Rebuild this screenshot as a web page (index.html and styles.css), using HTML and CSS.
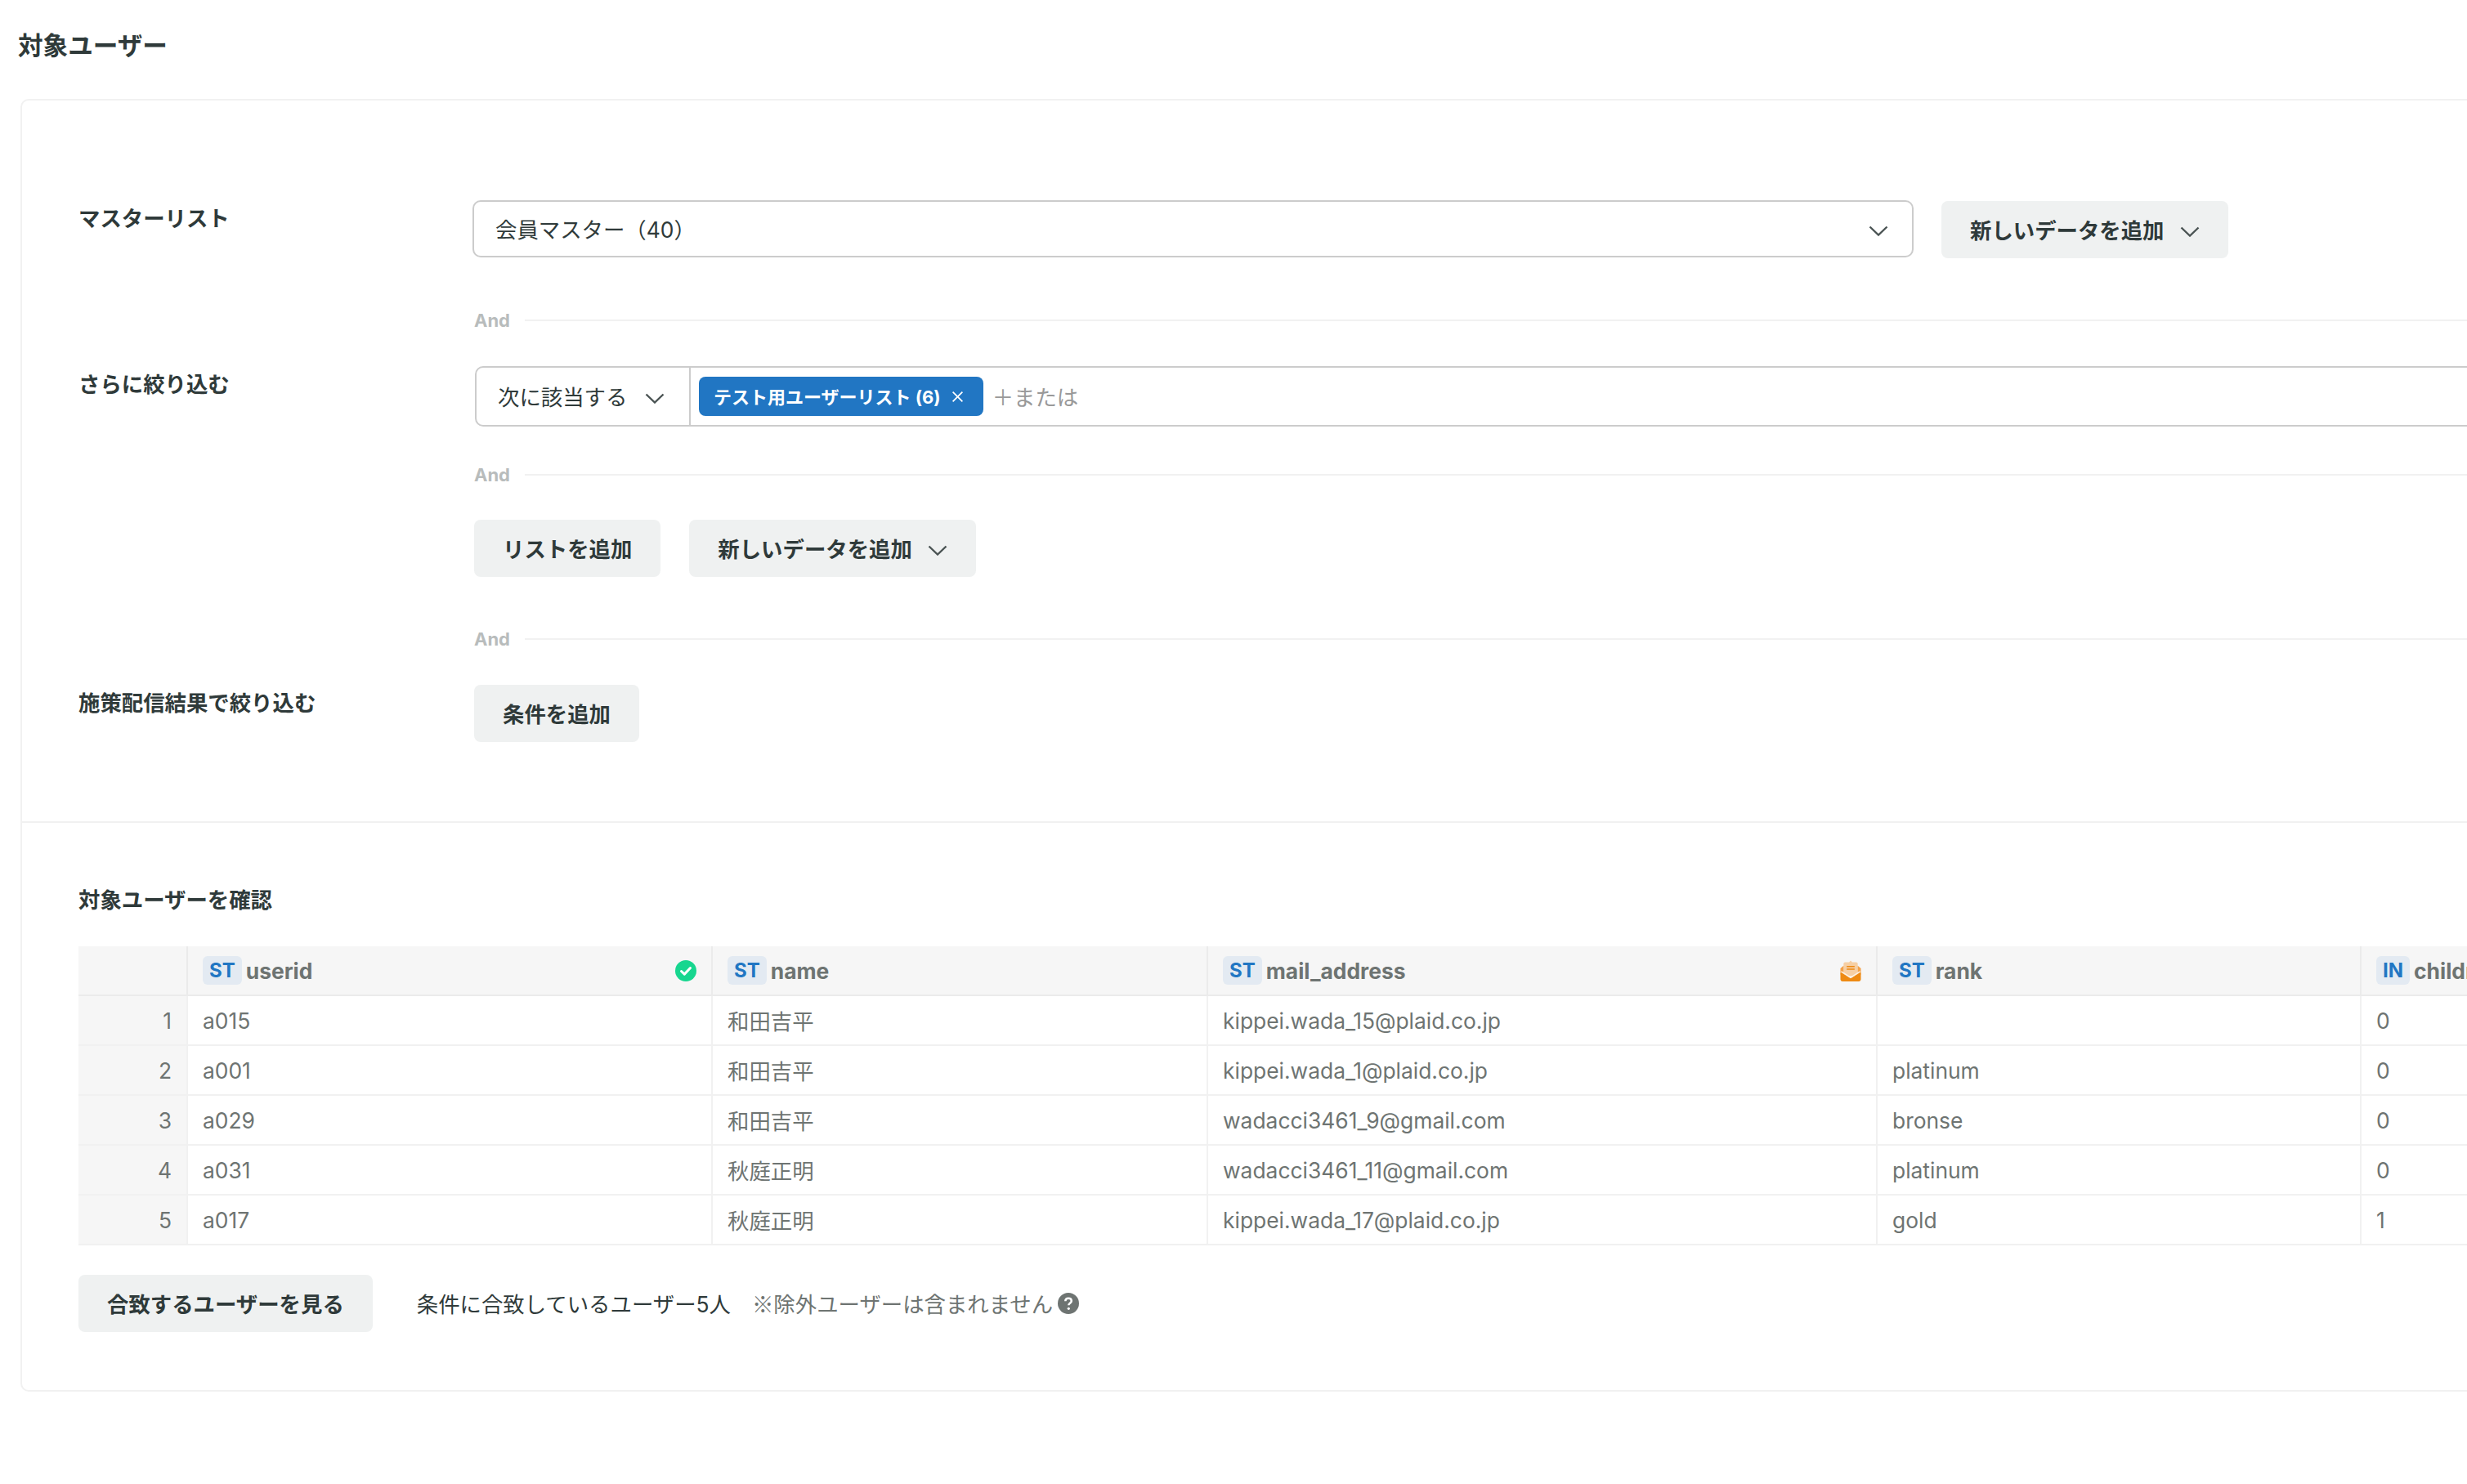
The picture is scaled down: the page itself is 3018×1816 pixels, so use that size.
FILE: index.html
```html
<!DOCTYPE html>
<html lang="ja">
<head>
    <meta charset="UTF-8">
    <title>対象ユーザー</title>
    <link rel="stylesheet" href="styles.css">
</head>
<body>
<div class="page">
    <h1 class="page-title">対象ユーザー</h1>
    <div class="card">
        <div class="conditions">
            <div class="cond-row">
                <div class="cond-label">マスターリスト</div>
                <div class="cond-body">
                    <div class="master-line">
                        <div class="select">
                            <span class="select-text">会員マスター（40）</span>
                            <svg class="chevron" viewBox="0 0 24 13"><path d="M1.500 1.500 12 11.500l10.500-10"/></svg>
                        </div>
                        <button class="btn">新しいデータを追加<svg class="chevron chevron-btn" viewBox="0 0 24 13"><path d="M1.500 1.500 12 11.500l10.500-10"/></svg></button>
                    </div>
                </div>
            </div>
            <div class="and-row and-outer"><span>And</span></div>
            <div class="cond-row">
                <div class="cond-label">さらに絞り込む</div>
                <div class="cond-body">
                    <div class="filter">
                        <div class="filter-mode">
                            <span class="select-text">次に該当する</span>
                            <svg class="chevron" viewBox="0 0 24 13"><path d="M1.500 1.500 12 11.500l10.500-10"/></svg>
                        </div>
                        <div class="filter-items">
                            <span class="chip">テスト用ユーザーリスト (6)<svg class="chip-x" viewBox="0 0 14 14"><path d="M1.500 1.500l11 11M12.500 1.500l-11 11"/></svg></span>
                            <span class="filter-or">＋または</span>
                        </div>
                    </div>
                    <div class="and-row and-inner"><span>And</span></div>
                    <div class="btn-line">
                        <button class="btn">リストを追加</button>
                        <button class="btn">新しいデータを追加<svg class="chevron chevron-btn" viewBox="0 0 24 13"><path d="M1.500 1.500 12 11.500l10.500-10"/></svg></button>
                    </div>
                </div>
            </div>
            <div class="and-row and-outer"><span>And</span></div>
            <div class="cond-row">
                <div class="cond-label">施策配信結果で絞り込む</div>
                <div class="cond-body">
                    <div class="btn-line">
                        <button class="btn">条件を追加</button>
                    </div>
                </div>
            </div>
        </div>
        <div class="preview">
            <h2 class="preview-title">対象ユーザーを確認</h2>
            <table class="users">
                <colgroup>
                    <col class="col-num">
                    <col class="col-userid">
                    <col class="col-name">
                    <col class="col-mail">
                    <col class="col-rank">
                    <col class="col-child">
                </colgroup>
                <thead>
                    <tr>
                        <th class="num"></th>
                        <th><div class="th-inner"><span class="type">ST</span>userid
                            <svg class="th-icon" viewBox="0 0 26 26"><circle cx="13" cy="13" r="13" fill="#17d68f"/><path d="M7.500 13.500l3.800 3.600 7.200-7.600" fill="none" stroke="#fff" stroke-width="3" stroke-linecap="round" stroke-linejoin="round"/></svg></div></th>
                        <th><div class="th-inner"><span class="type">ST</span>name</div></th>
                        <th><div class="th-inner"><span class="type">ST</span>mail_address
                            <svg class="th-icon" viewBox="0 0 26 27"><path d="M4 4.500Q4 2.500 6 2.500H11L13 .5l2 2h5q2 0 2 2V20H4z" fill="#f6cfa4"/><path d="M8 8h10M8 11.500h10" stroke="#ee8a13" stroke-width="1.600"/><path d="M4 7 0 10.500V15l4 3zM22 7l4 3.500V15l-4 3z" fill="#f3a14a"/><path d="M0 17l13 8 13-8v7.500q0 2.500-2.500 2.500H2.500Q0 27 0 24.500z" fill="#ee8a13"/><path d="M0 15l13 8 13-8v3L13 26 0 18z" fill="#ee8a13"/><path d="M1 14.500l12 7.500 12-7.500" fill="none" stroke="#fdf1e3" stroke-width="1.600"/></svg></div></th>
                        <th><div class="th-inner"><span class="type">ST</span>rank</div></th>
                        <th><div class="th-inner"><span class="type">IN</span>children</div></th>
                    </tr>
                </thead>
                <tbody id="user-rows"></tbody>
            </table>
            <div class="preview-foot">
                <button class="btn">合致するユーザーを見る</button>
                <span class="match-count">条件に合致しているユーザー5人</span>
                <span class="match-note">※除外ユーザーは含まれません</span>
                <svg class="help" viewBox="0 0 26 26"><circle cx="13" cy="13" r="13" fill="#6e7472"/><path d="M9.300 10.200c0-2.200 1.700-3.500 3.800-3.500s3.700 1.200 3.700 3.200c0 2.700-3.500 2.800-3.500 5.300" fill="none" stroke="#fff" stroke-width="2.500"/><circle cx="13.300" cy="19.300" r="1.600" fill="#fff"/></svg>
            </div>
        </div>
    </div>
</div>
<script>
    const users = [
        { id: 'a015', name: '和田吉平', mail: 'kippei.wada_15@plaid.co.jp', rank: '', child: 0 },
        { id: 'a001', name: '和田吉平', mail: 'kippei.wada_1@plaid.co.jp', rank: 'platinum', child: 0 },
        { id: 'a029', name: '和田吉平', mail: 'wadacci3461_9@gmail.com', rank: 'bronse', child: 0 },
        { id: 'a031', name: '秋庭正明', mail: 'wadacci3461_11@gmail.com', rank: 'platinum', child: 0 },
        { id: 'a017', name: '秋庭正明', mail: 'kippei.wada_17@plaid.co.jp', rank: 'gold', child: 1 },
    ];

    const tbody = document.getElementById('user-rows');
    users.forEach((user, index) => {
        const row = document.createElement('tr');
        row.innerHTML = `
            <td class="num">${index + 1}</td>
            <td>${user.id}</td>
            <td>${user.name}</td>
            <td>${user.mail}</td>
            <td>${user.rank}</td>
            <td>${user.child}</td>
        `;
        tbody.appendChild(row);
    });
</script>
</body>
</html>
```

FILE: styles.css
```css
html, body { margin: 0; padding: 0; background: #fff; overflow: hidden; height: 100%; }
body { font-family: Inter, "Noto Sans CJK JP", sans-serif; font-size: 26.4px; font-feature-settings: "calt" 0; color: #2f3a3a; }
.page { width: 3300px; padding-left: 22px; }
.page-title { margin: 0; height: 121px; line-height: 112px; font-size: 30.600px; font-weight: 700; }

.card { margin-left: 3px; border: 2px solid #f1f1f1; border-radius: 10px; }
.conditions { padding: 122px 0 97px 69px; border-bottom: 2px solid #f1f1f1; }
.cond-row { display: flex; }
.cond-label { width: 484px; flex: none; line-height: 45px; font-weight: 700; }
.cond-body { flex: 1; }

.master-line { display: flex; gap: 34px; }
.select { width: 1763px; height: 70px; margin-left: -2px; padding: 0 29px 0 26px; border: 2px solid #ccc; border-radius: 10px; display: flex; align-items: center; justify-content: space-between; box-sizing: border-box; }
.select-text { margin-top: -2px; }
.chevron { width: 24px; height: 13px; margin-top: 4px; fill: none; stroke: #4a5353; stroke-width: 2.400; }
.chevron-btn { margin-left: 19px; margin-top: 6px; }

.btn { height: 70px; padding: 0 35px 2px; border: none; border-radius: 8px; background: #eff1f1; color: #2f3a3a; font: 700 26.400px Inter, "Noto Sans CJK JP", sans-serif; font-feature-settings: "calt" 0; display: inline-flex; align-items: center; }
.master-line .btn { margin-top: 1px; }
.btn-line { display: flex; gap: 35px; }

.and-row { display: flex; align-items: center; gap: 18px; height: 34px; font-size: 22px; font-weight: 700; color: #b8bcbc; }
.and-row::after { content: ""; flex: 1; height: 2px; background: #f1f1f1; }
.and-outer { margin: 59px 0 39px 484px; }
.and-inner { margin: 42px 0 38px; }

.filter { display: flex; height: 74px; box-sizing: border-box; border: 2px solid #ccc; border-radius: 10px 0 0 10px; margin-left: 1px; }
.filter-mode { width: 262px; flex: none; padding: 0 30px 0 26px; display: flex; align-items: center; justify-content: space-between; box-sizing: border-box; border-right: 2px solid #ccc; }
.filter-items { display: flex; align-items: center; padding-left: 10px; }
.chip { height: 48px; padding: 0 24px 2px 18px; box-sizing: border-box; border-radius: 8px; background: #2176c3; color: #fff; font-size: 22px; font-weight: 700; display: inline-flex; align-items: center; }
.chip-x { width: 15px; height: 15px; margin-left: 13px; margin-top: 2px; fill: none; stroke: #fff; stroke-width: 1.600; }
.filter-or { margin-left: 11px; margin-top: -2px; color: #999; }

.preview { padding: 72px 0 71px 69px; }
.preview-title { margin: 0 0 33px; height: 46px; line-height: 44px; font-size: 26.400px; font-weight: 700; }
.users { width: 3200px; table-layout: fixed; border-collapse: separate; border-spacing: 0; color: #6e7472; }
.col-num { width: 134px; }
.col-userid { width: 642px; }
.col-name { width: 606px; }
.col-mail { width: 819px; }
.col-rank { width: 592px; }
.users th, .users td { height: 59px; padding: 0 18px; border-right: 2px solid #f1f1f1; border-bottom: 2px solid #f1f1f1; text-align: left; white-space: nowrap; box-sizing: content-box; }
.users th { background: #f6f6f6; font-weight: 700; border-right-color: #ebebeb; border-bottom-color: #ebebeb; }
.users .num { background: #f6f6f6; text-align: right; padding-right: 18px; }
.th-inner { display: flex; align-items: center; }
.type { height: 35px; padding: 0 8px; margin-right: 5px; border-radius: 6px; background: #e3eaf2; color: #2176c3; font-size: 24px; line-height: 35px; }
.th-icon { width: 26px; height: 26px; margin-left: auto; }

.preview-foot { display: flex; align-items: center; margin-top: 36px; }
.match-count { margin-left: 54px; margin-top: -2px; }
.match-note { margin-left: 26px; margin-top: -2px; color: #6e7472; font-family: "Noto Sans CJK JP", sans-serif; }
.help { width: 26px; height: 26px; margin-left: 6px; }
```
